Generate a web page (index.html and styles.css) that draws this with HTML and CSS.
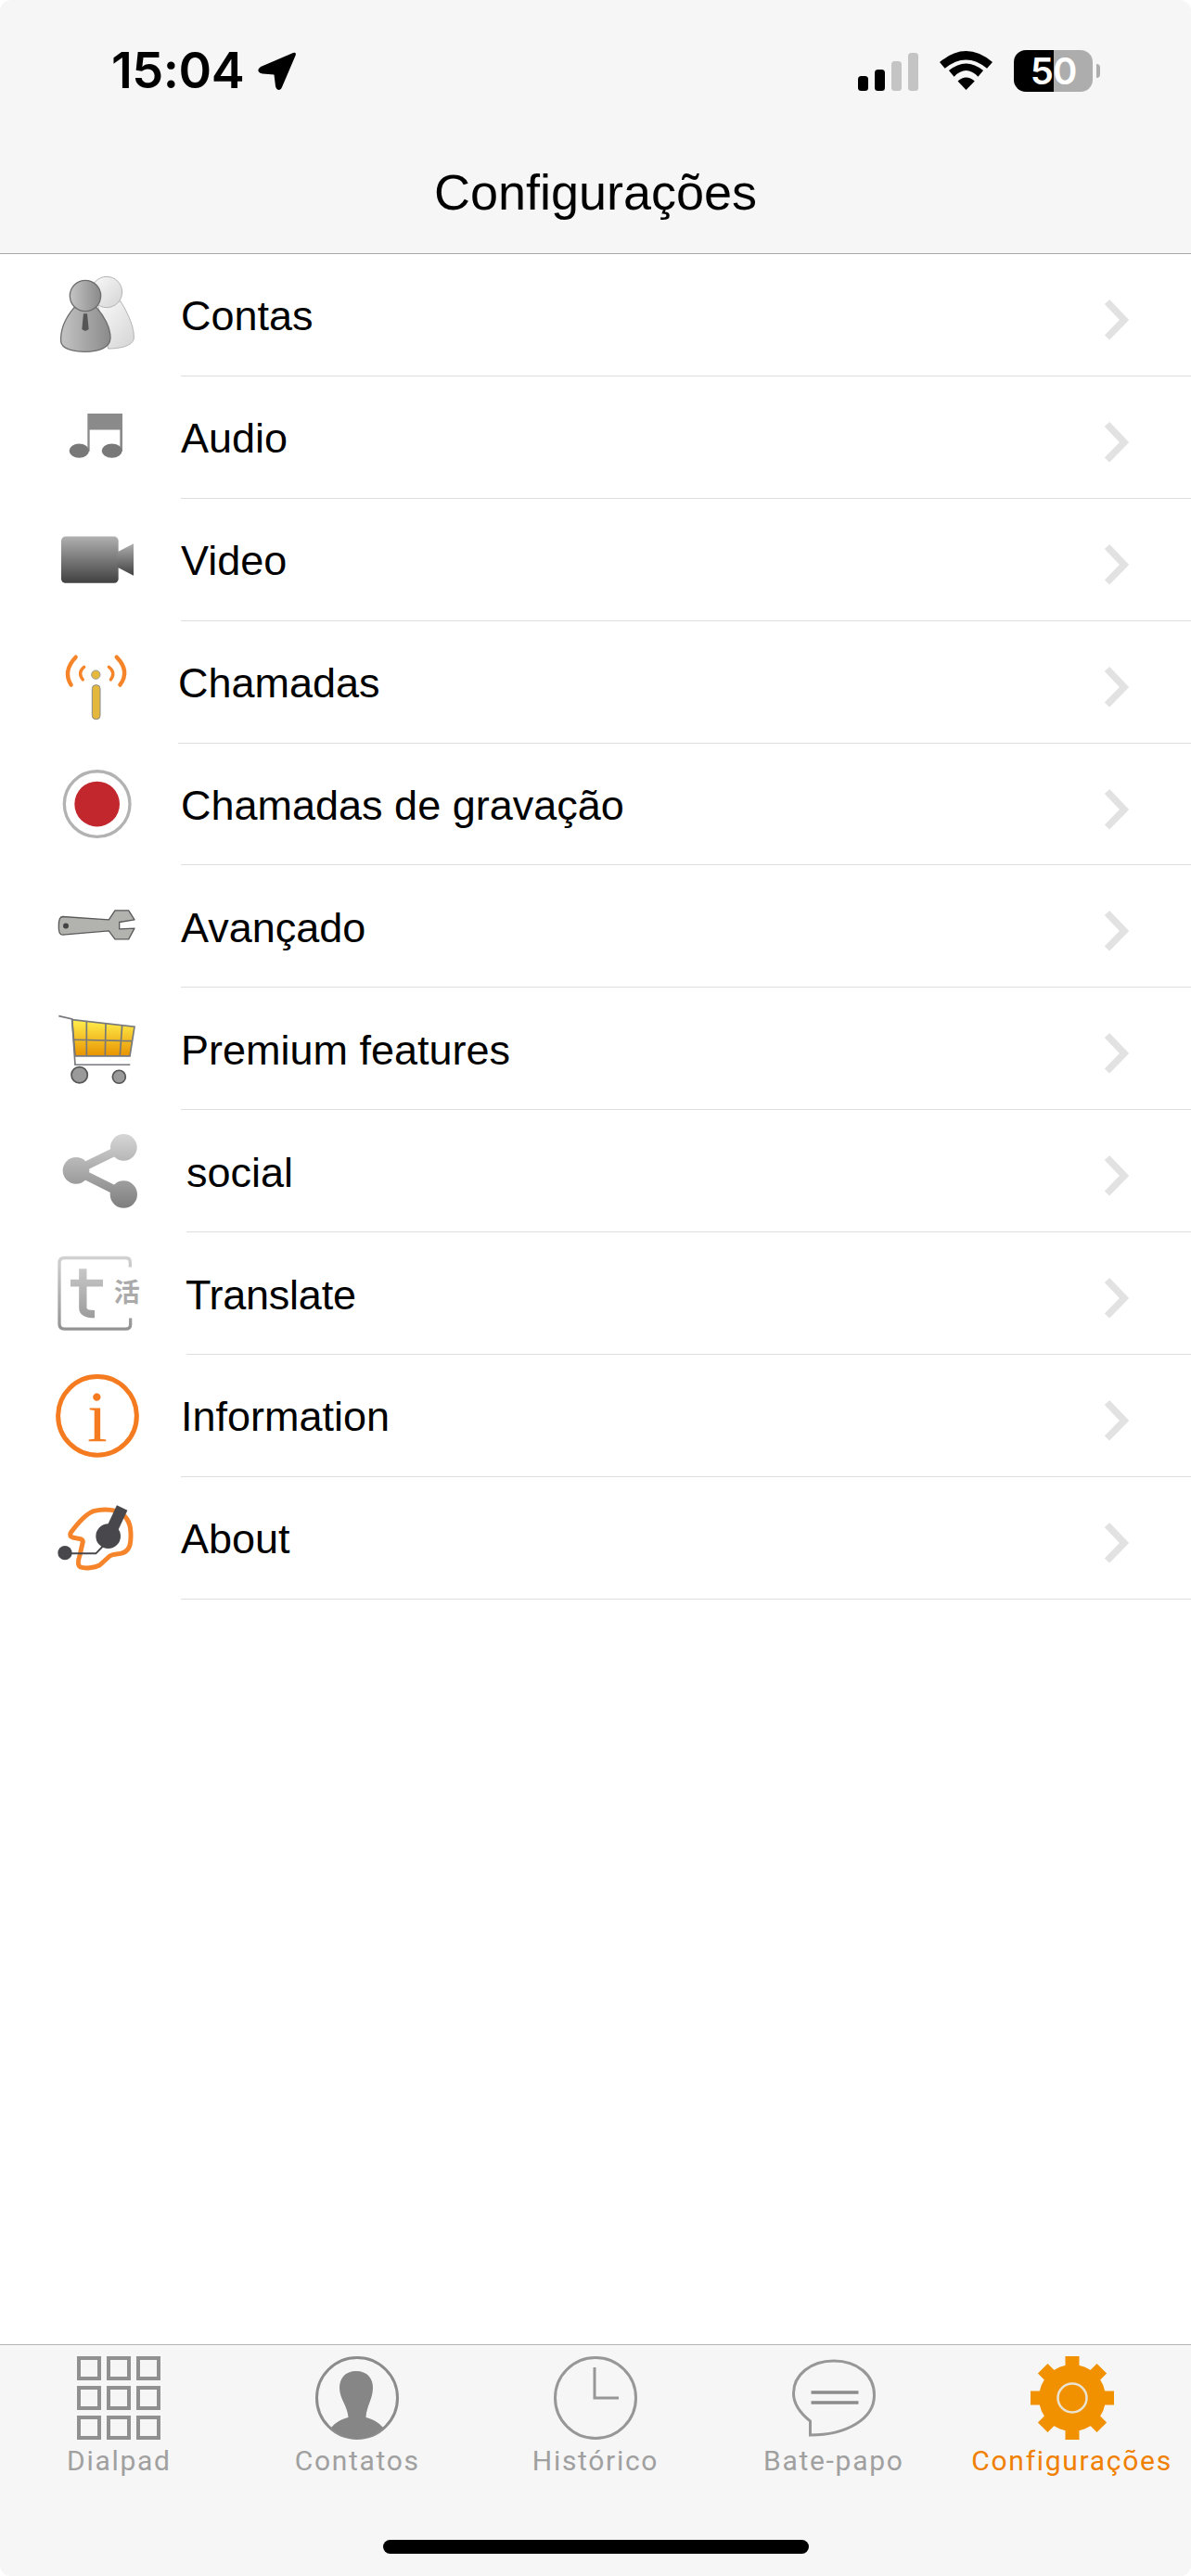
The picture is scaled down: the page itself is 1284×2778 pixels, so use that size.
FILE: index.html
```html
<!DOCTYPE html>
<html lang="pt">
<head>
<meta charset="utf-8">
<title>Configurações</title>
<link rel="stylesheet" href="styles.css">
</head>
<body>
<div class="screen">
  <header class="header">
    <div class="status">
      <span class="time">15:04</span>
      <svg class="arrow" viewBox="0 0 42 41"><path d="M38,1 L3,16 Q-1,19 1,21.5 Q2,23 5,23.5 L17.5,24.5 L19,37 Q20,41 23,41 Q25,41 26,38 L40.5,4 Q42,0 38,1 Z"/></svg>
      <div class="status-right">
        <svg class="signal" viewBox="0 0 65 41">
          <rect x="0" y="25" width="11" height="16" rx="3.5"/>
          <rect x="18" y="18" width="11" height="23" rx="3.5"/>
          <rect x="36" y="9" width="11" height="32" rx="3.5" fill="#c4c4c4"/>
          <rect x="54" y="0" width="11" height="41" rx="3.5" fill="#c4c4c4"/>
        </svg>
        <svg class="wifi" viewBox="398 72 172 126">
          <path d="M398,108 Q484,36 570,108 L552,128 Q484,72 415,128 Z"/>
          <path d="M428,135 Q484,89 540,135 L523,155 Q484,115 445,155 Z"/>
          <path d="M457,170 Q484,146 512,170 L484,198 Z"/>
        </svg>
        <div class="battery"><span class="batt-body">50</span><span class="batt-nub"></span></div>
      </div>
    </div>
    <h1 class="title">Configurações</h1>
  </header>

  <main class="list">
    <div class="row">
      <svg class="ic" viewBox="60 60 300 300">
        <defs>
          <linearGradient id="pb" x1="0" x2="1" y1="0" y2="1"><stop offset="0" stop-color="#fafafa"/><stop offset="1" stop-color="#d4d4d4"/></linearGradient>
          <linearGradient id="pf" x1="0" x2="1" y1="0" y2="0"><stop offset="0" stop-color="#c4c4c4"/><stop offset="1" stop-color="#8a8a8a"/></linearGradient>
        </defs>
        <path d="M225,170 C270,185 290,160 300,165 C325,205 345,250 343,285 C340,308 300,318 260,318 Z" fill="url(#pb)" stroke="#b4b4b4" stroke-width="3"/>
        <circle cx="255" cy="135" r="50" fill="url(#pb)" stroke="#b4b4b4" stroke-width="3"/>
        <path d="M150,185 C120,220 105,260 107,295 C110,320 150,328 185,328 C230,328 265,315 267,285 C268,250 245,210 222,185 Z" fill="url(#pf)" stroke="#6e6e6e" stroke-width="4"/>
        <circle cx="186" cy="147" r="50" fill="url(#pf)" stroke="#6e6e6e" stroke-width="4"/>
        <path d="M180,205 L192,205 L197,255 Q186,265 175,255 Z" fill="#555"/>
      </svg>
      <div class="row-body"><span class="label">Contas</span><svg class="chev" viewBox="0 0 26 44"><path d="M2.5,2.5 L21,22 L2.5,41"/></svg></div>
    </div>

    <div class="row">
      <svg class="ic" viewBox="60 455.7 300 300">
        <path d="M193,528 H306 V650 H298 V580 H200 V650 H193 Z" fill="#8a8a8a"/>
        <ellipse cx="166" cy="648" rx="32" ry="23" fill="#787878"/>
        <ellipse cx="272" cy="648" rx="33" ry="23" fill="#787878"/>
      </svg>
      <div class="row-body"><span class="label">Audio</span><svg class="chev" viewBox="0 0 26 44"><path d="M2.5,2.5 L21,22 L2.5,41"/></svg></div>
    </div>

    <div class="row">
      <svg class="ic" viewBox="60 851.4 300 300">
        <defs>
          <linearGradient id="vd" x1="0" x2="0" y1="0" y2="1"><stop offset="0" stop-color="#b0b0b0"/><stop offset="1" stop-color="#404040"/></linearGradient>
        </defs>
        <rect x="108" y="925" width="185" height="151" rx="14" fill="url(#vd)"/>
        <path d="M290,975 L342,948 V1052 L290,1025 Z" fill="url(#vd)"/>
      </svg>
      <div class="row-body"><span class="label">Video</span><svg class="chev" viewBox="0 0 26 44"><path d="M2.5,2.5 L21,22 L2.5,41"/></svg></div>
    </div>

    <div class="row row-narrow">
      <svg class="ic" viewBox="60 47.1 300 300">
        <g fill="none" stroke="#f6852a" stroke-linecap="round">
          <path d="M155,115 Q112,160 140,205" stroke-width="13"/>
          <path d="M287,115 Q332,160 298,205" stroke-width="13"/>
          <path d="M182,147 Q160,165 178,188" stroke-width="10"/>
          <path d="M262,147 Q285,165 268,188" stroke-width="10"/>
        </g>
        <circle cx="220" cy="172" r="14" fill="#e6b93c" stroke="#999" stroke-width="3"/>
        <rect x="208" y="205" width="26" height="111" rx="12" fill="#e3b83d" stroke="#888" stroke-width="3"/>
      </svg>
      <div class="row-body"><span class="label">Chamadas</span><svg class="chev" viewBox="0 0 26 44"><path d="M2.5,2.5 L21,22 L2.5,41"/></svg></div>
    </div>

    <div class="row">
      <svg class="ic" viewBox="60 442.8 300 300">
        <circle cx="224" cy="590" r="106" fill="#fff" stroke="#b2b2b2" stroke-width="10"/>
        <circle cx="224" cy="590" r="73" fill="#c1272d"/>
      </svg>
      <div class="row-body"><span class="label">Chamadas de gravação</span><svg class="chev" viewBox="0 0 26 44"><path d="M2.5,2.5 L21,22 L2.5,41"/></svg></div>
    </div>

    <div class="row">
      <svg class="ic" viewBox="60 838.5 300 300">
        <path d="M112,957 L262,967 L282,937 L326,937 L345,967 L296,975 V997 L345,995 L326,1030 L282,1030 L262,1003 L112,1016 Q98,1015 100,985 Q100,958 112,957 Z" fill="#b2b2ae" stroke="#5a5a5a" stroke-width="4" stroke-linejoin="round"/>
        <circle cx="123" cy="987" r="9" fill="#444"/>
      </svg>
      <div class="row-body"><span class="label">Avançado</span><svg class="chev" viewBox="0 0 26 44"><path d="M2.5,2.5 L21,22 L2.5,41"/></svg></div>
    </div>

    <div class="row">
      <svg class="ic" viewBox="60 34.2 300 300">
        <defs>
          <linearGradient id="ct" x1="0" x2="0" y1="0" y2="1"><stop offset="0" stop-color="#fff04e"/><stop offset="1" stop-color="#e89200"/></linearGradient>
        </defs>
        <path d="M143,90 L345,113 L330,208 L153,208 Z" fill="url(#ct)" stroke="#77787c" stroke-width="5"/>
        <g fill="none" stroke="#77787c" stroke-width="5">
          <path d="M190,95 V206 M252,102 L250,206 M305,108 L298,206 M147,155 L338,159"/>
          <path d="M100,78 L143,88 L153,236 H331"/>
        </g>
        <circle cx="167" cy="269" r="26" fill="#9a9a9a" stroke="#555" stroke-width="5"/>
        <circle cx="295" cy="275" r="21" fill="#9a9a9a" stroke="#555" stroke-width="5"/>
      </svg>
      <div class="row-body"><span class="label">Premium features</span><svg class="chev" viewBox="0 0 26 44"><path d="M2.5,2.5 L21,22 L2.5,41"/></svg></div>
    </div>

    <div class="row row-wide">
      <svg class="ic" viewBox="60 429.9 300 300">
        <defs>
          <linearGradient id="sh" gradientUnits="userSpaceOnUse" x1="0" x2="0" y1="460" y2="700"><stop offset="0" stop-color="#d6d6d6"/><stop offset="1" stop-color="#7e7e7e"/></linearGradient>
        </defs>
        <path d="M156,578 L310,503 M156,578 L310,655" stroke="url(#sh)" stroke-width="28" fill="none"/>
        <circle cx="310" cy="503" r="43" fill="url(#sh)"/>
        <circle cx="156" cy="578" r="43" fill="url(#sh)"/>
        <circle cx="310" cy="655" r="44" fill="url(#sh)"/>
      </svg>
      <div class="row-body"><span class="label">social</span><svg class="chev" viewBox="0 0 26 44"><path d="M2.5,2.5 L21,22 L2.5,41"/></svg></div>
    </div>

    <div class="row row-wide">
      <svg class="ic" viewBox="60 825.6 300 300">
        <defs>
          <linearGradient id="tr" gradientUnits="userSpaceOnUse" x1="0" x2="0" y1="855" y2="1095"><stop offset="0" stop-color="#d2d2d2"/><stop offset="1" stop-color="#929292"/></linearGradient>
        </defs>
        <path d="M331,890 V874 Q331,860 317,860 H118 Q102,860 102,876 V1074 Q102,1090 118,1090 H317 Q332,1090 332,1075 V1055" fill="none" stroke="url(#tr)" stroke-width="10"/>
        <path d="M178,895 V1022 Q178,1042 216,1042" fill="none" stroke="url(#tr)" stroke-width="25"/>
        <rect x="138" y="930" width="105" height="23" fill="url(#tr)"/>
        <text class="ic-cjk" x="278" y="1003">活</text>
      </svg>
      <div class="row-body"><span class="label label-tight">Translate</span><svg class="chev" viewBox="0 0 26 44"><path d="M2.5,2.5 L21,22 L2.5,41"/></svg></div>
    </div>

    <div class="row">
      <svg class="ic" viewBox="60 111.3 300 300">
        <circle cx="225" cy="261" r="127" fill="none" stroke="#f47b20" stroke-width="15"/>
        <text class="ic-i" x="225" y="343">i</text>
      </svg>
      <div class="row-body"><span class="label">Information</span><svg class="chev" viewBox="0 0 26 44"><path d="M2.5,2.5 L21,22 L2.5,41"/></svg></div>
    </div>

    <div class="row">
      <svg class="ic" viewBox="60 507 300 300">
        <path d="M139,638 C160,610 190,575 215,568 C240,562 265,563 285,568 C315,578 332,600 333,640 C334,675 330,700 300,706 C285,709 275,707 265,714 L232,744 C215,753 185,755 170,750 C160,745 162,730 168,712 L178,668 Q178,660 165,658 L145,654 Q133,650 139,638 Z" fill="none" stroke="#f5842a" stroke-width="15" stroke-linejoin="round"/>
        <path d="M305,558 L262,650" stroke="#48484c" stroke-width="38"/>
        <circle cx="260" cy="650" r="40" fill="#48484c"/>
        <circle cx="120" cy="704" r="23" fill="#48484c"/>
        <path d="M120,706 H220 L250,675" fill="none" stroke="#48484c" stroke-width="6"/>
      </svg>
      <div class="row-body"><span class="label">About</span><svg class="chev" viewBox="0 0 26 44"><path d="M2.5,2.5 L21,22 L2.5,41"/></svg></div>
    </div>
  </main>

  <nav class="tabbar">
    <div class="tabs">
      <div class="tab">
        <svg class="tab-ic" viewBox="0 0 90 90">
          <g fill="none" stroke="#909090" stroke-width="4">
            <rect x="2" y="2" width="22" height="22"/><rect x="34" y="2" width="22" height="22"/><rect x="66" y="2" width="22" height="22"/>
            <rect x="2" y="34" width="22" height="22"/><rect x="34" y="34" width="22" height="22"/><rect x="66" y="34" width="22" height="22"/>
            <rect x="2" y="66" width="22" height="22"/><rect x="34" y="66" width="22" height="22"/><rect x="66" y="66" width="22" height="22"/>
          </g>
        </svg>
        <span class="tab-label">Dialpad</span>
      </div>
      <div class="tab">
        <svg class="tab-ic" viewBox="0 0 90 90">
          <circle cx="45" cy="45" r="43.5" fill="none" stroke="#8c8c8c" stroke-width="3"/>
          <path d="M44,16 C56,16 62,24 62,34 C62,46 55,54 54.5,66 C62,68 68,71 73,77 C65,85 55,89 45,89 C35,89 25,85 17,77 C22,71 28,68 35.5,66 C35,54 26,46 26,34 C26,24 32,16 44,16 Z" fill="#868686"/>
        </svg>
        <span class="tab-label">Contatos</span>
      </div>
      <div class="tab">
        <svg class="tab-ic" viewBox="0 0 90 90">
          <circle cx="45" cy="45" r="43.5" fill="none" stroke="#979797" stroke-width="3"/>
          <path d="M44,12 V45 H70" fill="none" stroke="#979797" stroke-width="3"/>
        </svg>
        <span class="tab-label">Histórico</span>
      </div>
      <div class="tab">
        <svg class="tab-ic" viewBox="0 0 90 90">
          <path d="M19.5,70 C7,60 1.5,50 1.5,40 C1.5,20 20,5 45,5 C70,5 88.5,20 88.5,42 C88.5,68 58,85 19.5,85 Z" fill="none" stroke="#979797" stroke-width="3"/>
          <path d="M20.5,39 H71.5 M20.5,50 H71.5" fill="none" stroke="#8c8c8c" stroke-width="3.5"/>
        </svg>
        <span class="tab-label">Bate-papo</span>
      </div>
      <div class="tab tab-active">
        <svg class="tab-ic" viewBox="0 0 90 90">
          <g fill="#f29100">
            <circle cx="45" cy="45" r="36"/>
            <rect x="37.5" y="0" width="15" height="90"/>
            <rect x="37.5" y="0" width="15" height="90" transform="rotate(45 45 45)"/>
            <rect x="37.5" y="0" width="15" height="90" transform="rotate(90 45 45)"/>
            <rect x="37.5" y="0" width="15" height="90" transform="rotate(135 45 45)"/>
          </g>
          <circle cx="45" cy="45" r="15.5" fill="#f29100" stroke="#ebe3d2" stroke-width="2.5"/>
        </svg>
        <span class="tab-label">Configurações</span>
      </div>
    </div>
    <div class="home"></div>
  </nav>
</div>
</body>
</html>
```

FILE: styles.css
```css
* { box-sizing: border-box; }
html, body { margin: 0; padding: 0; background: #fff; }
body { font-family: "Liberation Sans", Arial, sans-serif; color: #000; }

.screen {
  width: 1284px;
  height: 2778px;
  display: flex;
  flex-direction: column;
  border-radius: 12px;
  overflow: hidden;
}

.header {
  height: 274px;
  background: #f6f6f6;
  border-bottom: 1px solid #a6a6a6;
  padding-top: 46px;
  flex: none;
}
.status {
  height: 60px;
  display: flex;
  align-items: center;
  padding: 0 98px 0 120px;
}
.time {
  font-family: Inter, "Liberation Sans", sans-serif;
  font-weight: 600;
  font-size: 54px;
  letter-spacing: -0.5px;
  line-height: 60px;
}
.arrow { width: 42px; height: 41px; margin: 0 0 0 15px; flex: none; }
.status-right { margin-left: auto; display: flex; align-items: center; gap: 23px; }
.signal { width: 65px; height: 41px; margin-top: 2px; }
.wifi { width: 57px; height: 42px; }
.battery { display: flex; align-items: center; gap: 4px; }
.batt-body {
  width: 85px;
  height: 45px;
  border-radius: 13px;
  background: linear-gradient(90deg, #000 0 43px, #adadad 43px);
  color: #fff;
  font-family: Inter, "Liberation Sans", sans-serif;
  font-weight: 600;
  font-size: 40px;
  line-height: 45px;
  text-align: center;
  letter-spacing: -1px;
}
.batt-nub { width: 4px; height: 15px; border-radius: 0 8px 8px 0; background: #adadad; }
.title {
  margin: 70px 0 0;
  font-weight: 400;
  font-size: 54px;
  line-height: 62px;
  text-align: center;
}

.list { flex: 1; }
.row { height: 131.9px; display: flex; align-items: center; }
.ic { width: 100px; height: 100px; margin: 0 45px 0 50px; flex: none; overflow: visible; }
.row-narrow .ic { margin-right: 42px; }
.row-wide .ic { margin-right: 51px; }
.row-body {
  flex: 1;
  align-self: stretch;
  display: flex;
  align-items: center;
  border-bottom: 1px solid #dedede;
}
.label { flex: 1; font-size: 45px; line-height: 52px; margin-top: 4px; }
.label-tight { letter-spacing: -0.25px; margin-left: -1px; }
.chev { width: 26px; height: 44px; margin: 11px 67px 0 0; flex: none; overflow: visible; }
.chev path { fill: none; stroke: #e2e2e2; stroke-width: 7.5; }
.ic-cjk { font-family: "Noto Sans CJK SC", sans-serif; font-size: 84px; font-weight: 700; fill: #aaa; }
.ic-i { font-family: "Liberation Serif", serif; font-size: 235px; fill: #f47b20; text-anchor: middle; }

.tabbar {
  height: 250px;
  flex: none;
  background: #f6f6f6;
  border-top: 1px solid #b4b4b4;
  display: flex;
  flex-direction: column;
  align-items: center;
}
.tabs { width: 100%; display: flex; padding-top: 12px; }
.tab { flex: 1; min-width: 0; display: flex; flex-direction: column; align-items: center; }
.tab-ic { width: 90px; height: 90px; flex: none; }
.tab-label {
  font-family: Roboto, sans-serif;
  font-size: 30px;
  line-height: 36px;
  letter-spacing: 1.7px;
  color: #a0a0a0;
  margin-top: 5px;
  white-space: nowrap;
}
.tab-active .tab-label { color: #f08000; }
.home {
  width: 459px;
  height: 15px;
  border-radius: 8px;
  background: #000;
  margin-top: auto;
  margin-bottom: 24px;
}
```
